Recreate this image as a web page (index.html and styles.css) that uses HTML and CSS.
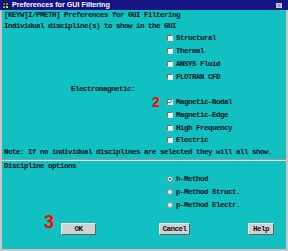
FILE: index.html
```html
<!DOCTYPE html>
<html lang="en">

<head>
  <meta charset="UTF-8">
  <title>Preferences for GUI Filtering</title>
  <link rel="stylesheet" href="styles.css">
</head>

<body>
  <!-- Dialog window -->
  <div class="window">
    <div class="titlebar">
      <svg class="app-icon" width="7" height="7" viewBox="0 0 7 7">
        <rect x="0" y="0" width="7" height="7" fill="#101040" />
        <rect x="1" y="1" width="2" height="2" fill="#e03030" />
        <rect x="4" y="1" width="2" height="2" fill="#30c030" />
        <rect x="1" y="4" width="2" height="2" fill="#30c0e0" />
        <rect x="4" y="4" width="2" height="2" fill="#e0e040" />
      </svg>
      <span class="title">Preferences for GUI Filtering</span>
      <span class="close-btn">
        <svg width="6" height="5" viewBox="0 0 6 5">
          <path d="M1.5 1 L4.5 4 M4.5 1 L1.5 4" stroke="#707070" stroke-width="0.8" fill="none" />
        </svg>
      </span>
    </div>

    <!-- Discipline selection -->
    <div class="content">
      <p class="line">[KEYW]I/PMETH] Preferences for GUI Filtering</p>
      <p class="line">Individual discipline(s) to show in the GUI</p>
      <div class="options">
        <label class="item"><span class="check"></span>Structural</label>
        <label class="item"><span class="check"></span>Thermal</label>
        <label class="item"><span class="check"></span>ANSYS Fluid</label>
        <label class="item"><span class="check"></span>FLOTRAN CFD</label>
        <div class="group-label">Electromagnetic:</div>
        <label class="item"><span class="check checked">
            <svg width="4" height="4" viewBox="0 0 4 4">
              <path d="M0.3 2 L1.5 3.3 L3.7 0.6" stroke="#202020" stroke-width="0.9" fill="none" />
            </svg>
          </span>Magnetic-Nodal</label>
        <label class="item"><span class="check"></span>Magnetic-Edge</label>
        <label class="item"><span class="check"></span>High Frequency</label>
        <label class="item"><span class="check"></span>Electric</label>
      </div>
      <p class="line">Note: If no individual disciplines are selected they will all show.</p>
    </div>

    <div class="separator"></div>

    <!-- Method options -->
    <div class="content">
      <p class="line">Discipline options</p>
      <div class="radios">
        <label class="item radio-row"><span class="radio selected"></span>h-Method</label>
        <label class="item radio-row"><span class="radio"></span>p-Method Struct.</label>
        <label class="item radio-row"><span class="radio"></span>p-Method Electr.</label>
      </div>
    </div>

    <div class="buttons">
      <button class="btn btn-ok">OK</button>
      <button class="btn btn-cancel">Cancel</button>
      <button class="btn btn-help">Help</button>
    </div>

    <!-- Step markers -->
    <span class="marker marker-2">2</span>
    <span class="marker marker-3">3</span>
  </div>
</body>

</html>
```

FILE: styles.css
```css
/* Colors */
:root {
  --title-color: hsl(240, 74%, 30%);
  --panel-color: hsl(180, 84%, 41%);
  --text-color: hsl(210, 60%, 8%);
  --frame-color: hsl(0, 0%, 78%);
  --button-color: hsl(0, 0%, 82%);
  --marker-color: hsl(0, 100%, 50%);
}

* {
  margin: 0;
  padding: 0;
  box-sizing: border-box;
}

body {
  font-family: "Liberation Mono", "DejaVu Sans Mono", monospace;
  font-weight: bold;
  font-size: 7.5px;
  letter-spacing: -0.5px;
  color: var(--text-color);
  background: #fff;
}

/* Window */
.window {
  position: relative;
  width: 288px;
  height: 251px;
  background: var(--panel-color);
  border-left: 2px solid var(--frame-color);
  border-right: 2px solid var(--frame-color);
  border-bottom: 2px solid var(--frame-color);
  display: flex;
  flex-direction: column;
}

.titlebar {
  height: 10px;
  margin: 0 -2px;
  background: var(--title-color);
  display: flex;
  align-items: center;
  padding-left: 2px;
  padding-right: 6px;
}

.app-icon {
  display: block;
  flex: none;
}

.title {
  margin-left: 3px;
  font-family: "Liberation Sans", Arial, sans-serif;
  font-size: 7.2px;
  letter-spacing: 0;
  color: #fff;
  flex: 1;
  line-height: 10px;
}

.close-btn {
  width: 6px;
  height: 5px;
  background: #c8c8c8;
  display: flex;
}

/* Content */
.content {
  padding-left: 2px;
}

.content:first-of-type {
  padding-top: 1px;
}

.line {
  line-height: 11px;
  white-space: nowrap;
}

.options {
  display: flex;
  flex-direction: column;
}

.item {
  height: 12.75px;
  padding-left: 163px;
  display: flex;
  align-items: center;
  gap: 3px;
  white-space: nowrap;
}

.group-label {
  height: 12.75px;
  line-height: 12.75px;
  width: 131px;
  text-align: right;
}

.check {
  width: 6px;
  height: 6px;
  background: #fff;
  border: 1px solid;
  border-color: #707070 #e8e8e8 #e8e8e8 #707070;
  display: flex;
  align-items: center;
  justify-content: center;
  flex: none;
}

.separator {
  margin-top: 1.25px;
  height: 2px;
  border-top: 1px solid #909898;
  border-bottom: 1px solid #e0e8e8;
}

.radio-row {
  height: 13px;
}

.radio {
  width: 6px;
  height: 6px;
  border-radius: 50%;
  background: #fff;
  border: 1px solid #8a9090;
  flex: none;
  display: flex;
  align-items: center;
  justify-content: center;
}

.radio.selected::after {
  content: "";
  width: 2px;
  height: 2px;
  border-radius: 50%;
  background: #303030;
}

/* Buttons */
.buttons {
  margin-top: 12px;
  display: flex;
  padding-left: 59px;
}

.btn {
  height: 12px;
  background: var(--button-color);
  border: 1px solid;
  border-color: #f4f4f4 #606060 #606060 #f4f4f4;
  font: inherit;
  letter-spacing: inherit;
  color: var(--text-color);
}

.btn-ok {
  width: 35px;
}

.btn-cancel {
  width: 31px;
  margin-left: 63px;
}

.btn-help {
  width: 26px;
  margin-left: 58px;
}

/* Markers */
.marker {
  position: absolute;
  font-family: "Liberation Sans", Arial, sans-serif;
  font-weight: bold;
  letter-spacing: 0;
  color: var(--marker-color);
  line-height: 1;
}

.marker-2 {
  left: 150px;
  top: 95px;
  font-size: 14px;
}

.marker-3 {
  left: 42px;
  top: 213px;
  font-size: 18px;
}
```
